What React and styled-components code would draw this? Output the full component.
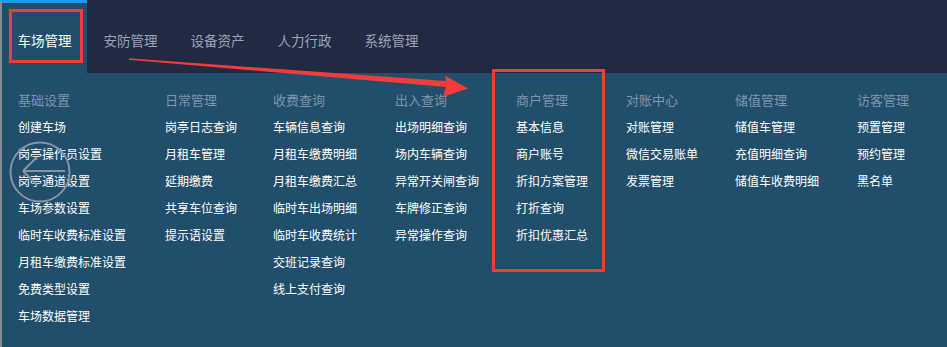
import React from "react";
import styled, { createGlobalStyle } from "styled-components";

const tabs = ["车场管理", "安防管理", "设备资产", "人力行政", "系统管理"];

const groups = [
  {
    title: "基础设置",
    items: [
      "创建车场",
      "岗亭操作员设置",
      "岗亭通道设置",
      "车场参数设置",
      "临时车收费标准设置",
      "月租车缴费标准设置",
      "免费类型设置",
      "车场数据管理",
    ],
  },
  {
    title: "日常管理",
    items: ["岗亭日志查询", "月租车管理", "延期缴费", "共享车位查询", "提示语设置"],
  },
  {
    title: "收费查询",
    items: [
      "车辆信息查询",
      "月租车缴费明细",
      "月租车缴费汇总",
      "临时车出场明细",
      "临时车收费统计",
      "交班记录查询",
      "线上支付查询",
    ],
  },
  {
    title: "出入查询",
    items: ["出场明细查询", "场内车辆查询", "异常开关闸查询", "车牌修正查询", "异常操作查询"],
  },
  {
    title: "商户管理",
    items: ["基本信息", "商户账号", "折扣方案管理", "打折查询", "折扣优惠汇总"],
    marked: true,
  },
  { title: "对账中心", items: ["对账管理", "微信交易账单", "发票管理"] },
  { title: "储值管理", items: ["储值车管理", "充值明细查询", "储值车收费明细"] },
  { title: "访客管理", items: ["预置管理", "预约管理", "黑名单"] },
];

const App = () => {
  return (
    <Page>
      <GlobalStyle />
      <TopBar>
        {tabs.map((t, i) => (
          <Tab key={t} active={i === 0}>
            {t}
          </Tab>
        ))}
      </TopBar>
      <Panel>
        {groups.map((g) => (
          <Column key={g.title} marked={g.marked}>
            <Heading>{g.title}</Heading>
            {g.items.map((it) => (
              <Item key={it}>{it}</Item>
            ))}
          </Column>
        ))}
      </Panel>

      {/* 返回手势的圆形提示 */}
      <BackHint width="66" height="66" viewBox="0 0 66 66">
        <circle cx="33" cy="33" r="29.5" fill="none" stroke="#8595a6" strokeWidth="2" />
        <path
          d="M16 32 L30 18 M16 32 L30 46 M16 32 L58 32"
          fill="none"
          stroke="#8595a6"
          strokeWidth="2"
        />
      </BackHint>

      {/* 标注箭头 */}
      <Arrow width="947" height="347" viewBox="0 0 947 347">
        <polygon
          points="129,58.3 446,81 445,75.5 468,88.5 443,97 446,87 129,59.7"
          fill="#f23b3b"
        />
      </Arrow>
    </Page>
  );
};

export default App;

const GlobalStyle = createGlobalStyle`
  body {
    margin: 0;
    background: #214f6b;
    font-family: "Noto Sans CJK SC", "Noto Sans", sans-serif;
  }
`;

const Page = styled.div`
  position: relative;
  width: 947px;
  height: 347px;
  display: flex;
  flex-direction: column;
  overflow: hidden;
`;

const TopBar = styled.div`
  display: flex;
  height: 73px;
  flex-shrink: 0;
  background: #222a43;
`;

const Tab = styled.div`
  position: relative;
  box-sizing: border-box;
  width: 87px;
  height: 73px;
  display: flex;
  align-items: center;
  justify-content: center;
  padding-top: 3px;
  font-size: 13.5px;
  color: ${(p) => (p.active ? "#ffffff" : "#9ba3b6")};
  background: ${(p) => (p.active ? "#214f6b" : "transparent")};
  border-top: 3px solid ${(p) => (p.active ? "#1b9cf2" : "transparent")};
  border-left: ${(p) => (p.active ? "2px solid #868b94" : "none")};

  ${(p) =>
    p.active &&
    `
    &::after {
      content: "";
      position: absolute;
      left: 7px;
      top: 6px;
      width: 74px;
      height: 54px;
      box-sizing: border-box;
      border: 3px solid #f23b3b;
    }
  `}
`;

const Panel = styled.div`
  flex: 1;
  display: grid;
  grid-template-columns: 147px 108px 122px 121px 110px 109px 122px auto;
  align-items: start;
  padding: 13px 0 0 16px;
  background: #214f6b;
  border-left: 2px solid #868b94;
`;

const Column = styled.div`
  position: relative;
  display: flex;
  flex-direction: column;

  ${(p) =>
    p.marked &&
    `
    &::after {
      content: "";
      position: absolute;
      left: -24px;
      top: -17px;
      width: 113px;
      bottom: -24px;
      box-sizing: border-box;
      border: 3px solid #f23b3b;
    }
  `}
`;

const Heading = styled.div`
  font-size: 13px;
  line-height: 27px;
  color: #7f94ab;
  white-space: nowrap;
`;

const Item = styled.div`
  font-size: 12px;
  line-height: 27px;
  color: #ffffff;
  white-space: nowrap;
`;

const BackHint = styled.svg`
  position: absolute;
  left: 7px;
  top: 139px;
  pointer-events: none;
`;

const Arrow = styled.svg`
  position: absolute;
  left: 0;
  top: 0;
  pointer-events: none;
`;
